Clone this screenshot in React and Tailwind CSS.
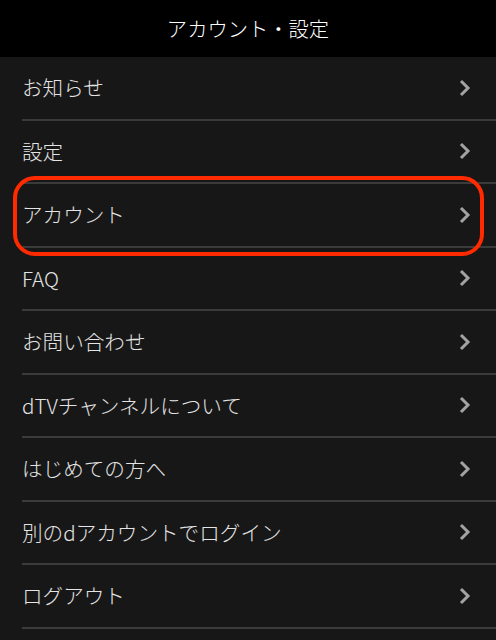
import React from "react";

const items = [
  "お知らせ",
  "設定",
  "アカウント",
  "FAQ",
  "お問い合わせ",
  "dTVチャンネルについて",
  "はじめての方へ",
  "別のdアカウントでログイン",
  "ログアウト",
];

function Chevron() {
  return (
    <svg width="14" height="18" viewBox="0 0 14 18" className="shrink-0">
      <path d="M3 2 L10 9 L3 16" fill="none" stroke="#a3a3a3" strokeWidth="3" strokeLinecap="butt" strokeLinejoin="miter" />
    </svg>
  );
}

export default function App() {
  return (
    <div
      className="relative w-[496px] h-[640px] overflow-hidden bg-[#171717]"
      style={{ fontFamily: '"Noto Sans CJK JP", "Noto Sans", sans-serif' }}
    >
      <div className="h-[57px] bg-black flex items-center justify-center">
        <span className="text-white text-[20.3px] font-light leading-none">アカウント・設定</span>
      </div>
      <div className="flex flex-col">
        {items.map((t, i) => (
          <div key={i} className="pl-[22px]">
            <div className="h-[63.5px] flex items-center justify-between pr-[24px] border-b-2 border-[#3b3b3b]">
              <span className="text-[#e4e4e4] text-[20.6px] font-light leading-none">{t}</span>
              <Chevron />
            </div>
          </div>
        ))}
      </div>
      <div className="absolute left-[13px] top-[176px] w-[471px] h-[80px] rounded-[22px] border-[4px] border-[#ff2a00]" />
    </div>
  );
}
